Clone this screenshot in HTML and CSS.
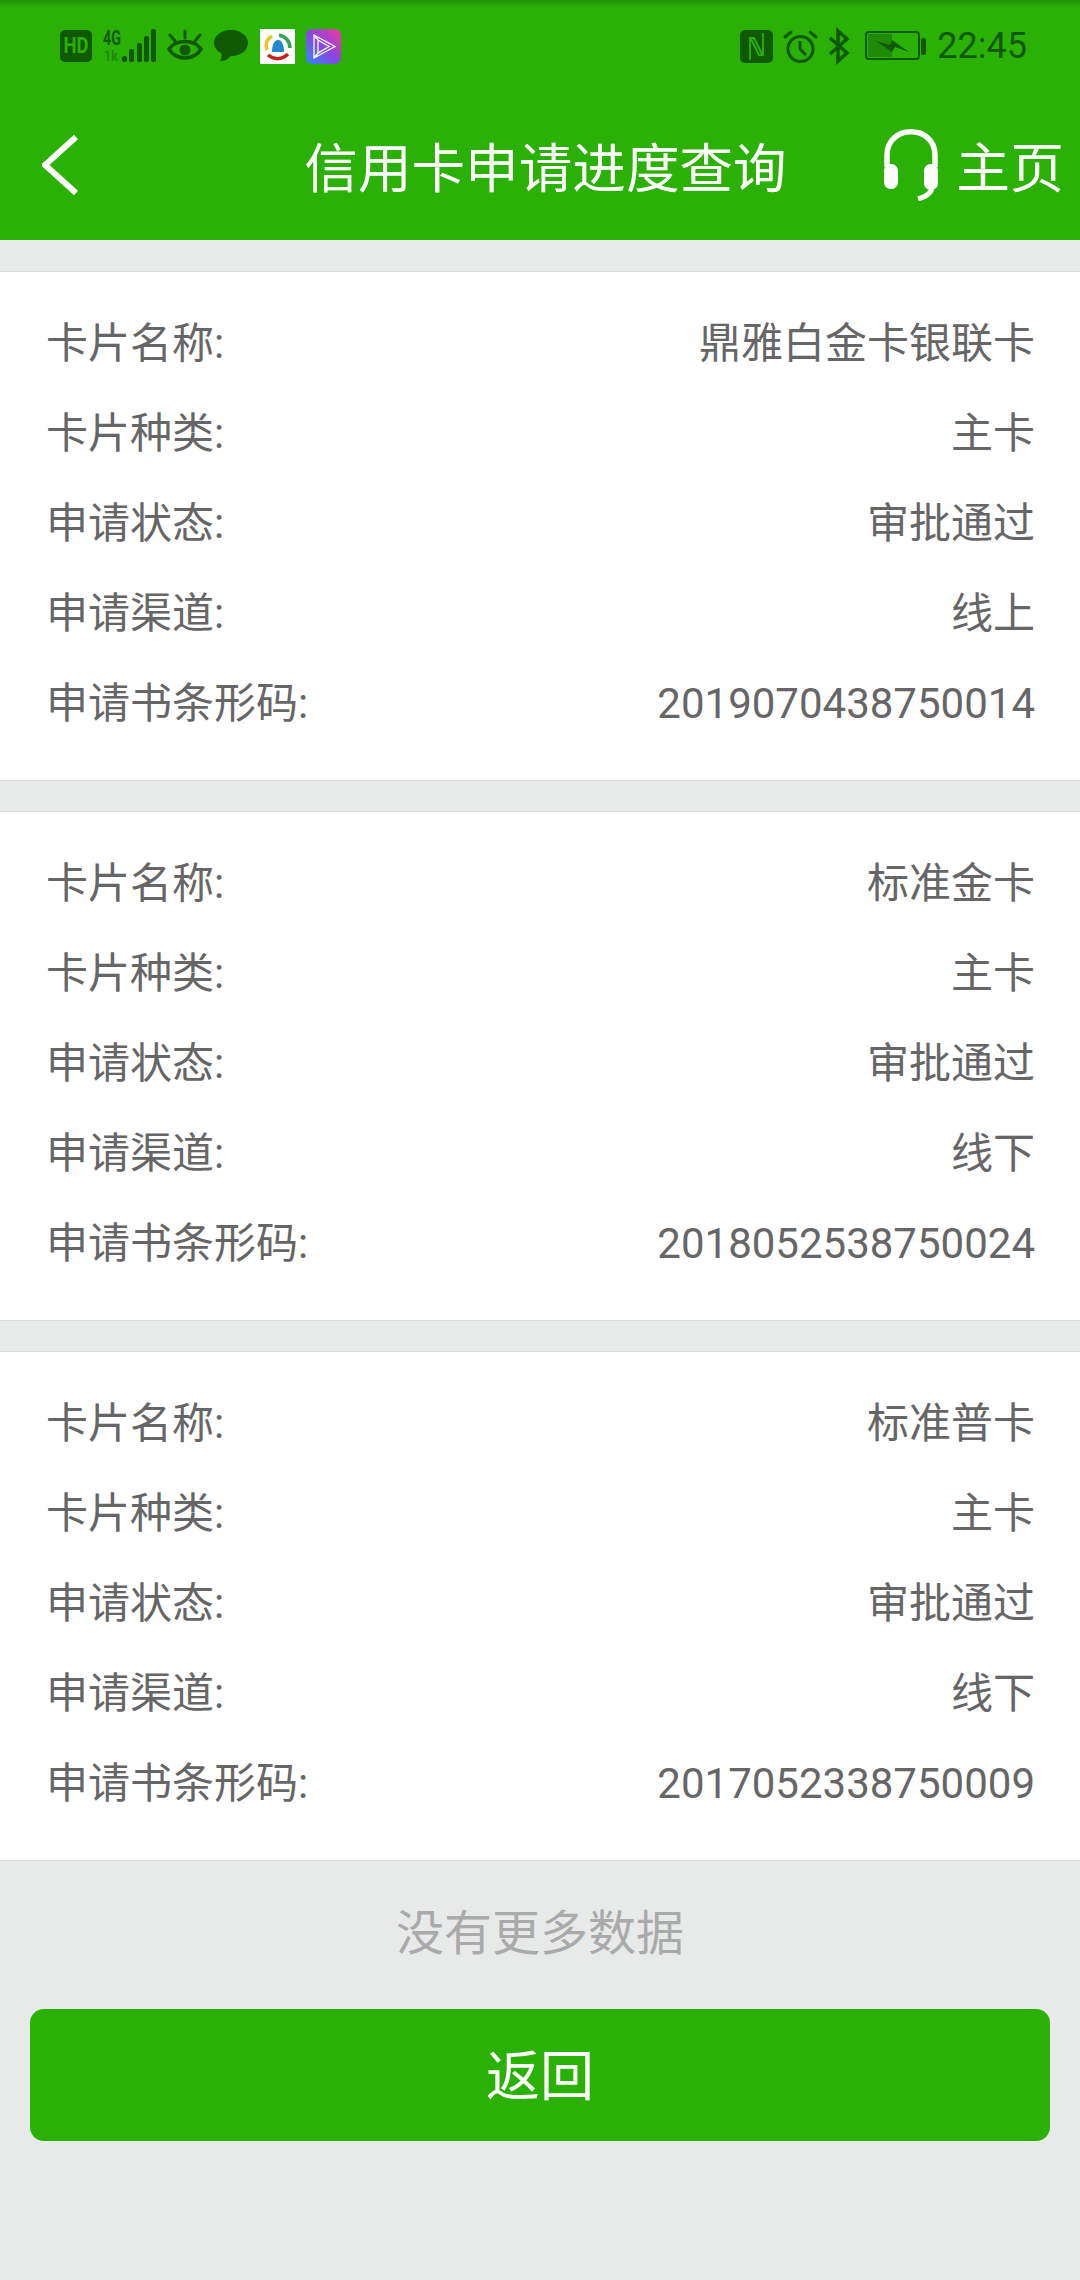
FILE: index.html
```html
<!DOCTYPE html>
<html lang="zh-CN">
<head>
    <meta charset="UTF-8">
    <meta name="viewport" content="width=device-width, initial-scale=1.0">
    <title>信用卡申请进度查询</title>
    <link rel="stylesheet" href="styles.css">
</head>
<body>
    <header class="top">
        <div class="status-bar">
            <div class="status-left">
                <svg class="ic" width="32" height="32" viewBox="0 0 32 32"><rect width="32" height="32" rx="5" fill="#0f5a00"/><text x="16" y="23" class="hd-text" textLength="25" lengthAdjust="spacingAndGlyphs">HD</text></svg>
                <svg class="ic" width="53" height="34" viewBox="0 0 53 34"><text x="0" y="16" class="net-text" textLength="18" lengthAdjust="spacingAndGlyphs">4G</text><text x="1" y="32" class="net-sub" textLength="14" lengthAdjust="spacingAndGlyphs">1k</text><g fill="#0f5a00"><rect x="19" y="27" width="5" height="6" rx="2"/><rect x="26" y="20" width="5" height="13" rx="2"/><rect x="34" y="14" width="5" height="19" rx="2"/><rect x="41" y="7" width="5" height="26" rx="2"/><rect x="48" y="0" width="5" height="33" rx="2"/></g></svg>
                <svg class="ic" width="36" height="32" viewBox="0 0 36 32" fill="none" stroke="#0f5a00" stroke-width="3.500"><path d="M2 19C9 9 27 9 34 19C27 31 9 31 2 19Z"/><circle cx="18" cy="20" r="5.500" fill="#0f5a00" stroke="none"/><path d="M18 1V8M3 5L8 11M33 5L28 11" stroke-linecap="round" stroke-width="3"/></svg>
                <svg class="ic chat" width="34" height="32" viewBox="0 0 34 32"><path d="M17 0C27 0 34 6 34 13C34 20 27 26 17 26C14 29 11 31 6 31C8 28 8 25 7 23C3 21 0 17 0 13C0 6 7 0 17 0Z" fill="#0f5a00"/></svg>
                <svg class="ic" width="35" height="35" viewBox="0 0 35 35"><rect width="35" height="35" rx="1" fill="#fff"/><g fill="none" stroke-width="3.500"><path d="M7 21C5 15 7 10 12 7" stroke="#eec32a"/><path d="M19 6C25 7 30 12 30 19" stroke="#33a35a"/><path d="M8 26C14 31 22 31 28 25" stroke="#c8201e"/></g><path d="M12 23C12 16 14 11 18 11C22 11 24 16 24 23Z" fill="#1f88d0"/></svg>
                <svg class="ic" width="35" height="35" viewBox="0 0 35 35"><defs><linearGradient id="vid" x1="0" y1="1" x2="1" y2="0"><stop offset="0" stop-color="#2f8cf5"/><stop offset="0.5" stop-color="#8a45e0"/><stop offset="1" stop-color="#f03a9c"/></linearGradient></defs><rect width="35" height="35" rx="6" fill="url(#vid)"/><path d="M8 6L29 17.500L8 29ZM12 11L23 17.500L12 24ZM8 6L12 11M8 29L12 24" fill="none" stroke="#fff" stroke-width="1.300"/></svg>
            </div>
            <div class="status-right">
                <svg class="ic" width="33" height="33" viewBox="0 0 33 33"><rect width="33" height="33" rx="5" fill="#0f5a00"/><path d="M10 30V8H14L23 26M23 3V25H19L10 7" fill="none" stroke="#2bb006" stroke-width="1.800"/></svg>
                <svg class="ic" width="33" height="34" viewBox="0 0 33 34" fill="none" stroke="#0f5a00" stroke-width="3"><circle cx="16.500" cy="20" r="12.500"/><path d="M16 12V20L22 26" stroke-width="3"/><path d="M1 8L7 3M32 8L26 3" stroke-linecap="round"/></svg>
                <svg class="ic bt" width="21" height="34" viewBox="0 0 21 34" fill="none" stroke="#0f5a00" stroke-width="3.500"><path d="M2 9L19 24L10 32V2L19 10L2 25"/></svg>
                <svg class="ic" width="61" height="30" viewBox="0 0 61 30"><rect x="1" y="1" width="53" height="27" rx="3" fill="none" stroke="#0f5a00" stroke-width="2"/><rect x="3" y="3" width="24" height="23" fill="#1f8a05"/><rect x="56" y="7" width="5" height="17" rx="2" fill="#0f5a00"/><path d="M11 10L25 14L27 9L44 21L30 16L27 21Z" fill="#0f5a00"/></svg>
                <span class="clock">22:45</span>
            </div>
        </div>
        <div class="nav-bar">
            <svg class="back" width="36" height="62" viewBox="0 0 36 62"><path d="M34 3L3 31L34 59" fill="none" stroke="#fff" stroke-width="6"/></svg>
            <h1 class="nav-title">信用卡申请进度查询</h1>
            <div class="nav-home">
                <svg width="56" height="74" viewBox="0 0 56 74"><path d="M4 40V28C4 -3 52 -3 52 28V40" fill="none" stroke="#fff" stroke-width="5.500"/><rect x="1" y="37" width="14" height="25" rx="6.500" fill="#fff"/><rect x="41" y="37" width="14" height="26" rx="6.500" fill="#fff"/><path d="M49 62C47 67 42 70 35 72" fill="none" stroke="#fff" stroke-width="5"/></svg>
                <span>主页</span>
            </div>
        </div>
    </header>

    <main class="list">
        <section class="card">
            <div class="row"><span>卡片名称:</span><span>鼎雅白金卡银联卡</span></div>
            <div class="row"><span>卡片种类:</span><span>主卡</span></div>
            <div class="row"><span>申请状态:</span><span>审批通过</span></div>
            <div class="row"><span>申请渠道:</span><span>线上</span></div>
            <div class="row"><span>申请书条形码:</span><span>2019070438750014</span></div>
        </section>
        <section class="card">
            <div class="row"><span>卡片名称:</span><span>标准金卡</span></div>
            <div class="row"><span>卡片种类:</span><span>主卡</span></div>
            <div class="row"><span>申请状态:</span><span>审批通过</span></div>
            <div class="row"><span>申请渠道:</span><span>线下</span></div>
            <div class="row"><span>申请书条形码:</span><span>2018052538750024</span></div>
        </section>
        <section class="card">
            <div class="row"><span>卡片名称:</span><span>标准普卡</span></div>
            <div class="row"><span>卡片种类:</span><span>主卡</span></div>
            <div class="row"><span>申请状态:</span><span>审批通过</span></div>
            <div class="row"><span>申请渠道:</span><span>线下</span></div>
            <div class="row"><span>申请书条形码:</span><span>2017052338750009</span></div>
        </section>
    </main>

    <p class="no-more">没有更多数据</p>
    <button type="button" class="back-btn">返回</button>
</body>
</html>
```

FILE: styles.css
```css
* {
    box-sizing: border-box;
}

body {
    margin: 0;
    height: 2280px;
    overflow: hidden;
    background-color: #e8eaea;
    font-family: "Roboto", "Noto Sans CJK SC", sans-serif;
}

.top {
    height: 240px;
    background-color: #2bb006;
    color: white;
}

.status-bar {
    height: 92px;
    padding: 0 53px 0 60px;
    display: flex;
    justify-content: space-between;
    align-items: center;
    background: linear-gradient(#249405, #2bb006 8px);
}

.status-left, .status-right {
    display: flex;
    align-items: center;
    gap: 11px;
}

.bt {
    margin-right: 5px;
}

.chat {
    margin-right: 1px;
}

.ic {
    display: block;
    overflow: visible;
}

.hd-text {
    font-size: 22px;
    font-weight: 700;
    fill: #2bb006;
    text-anchor: middle;
}

.net-text {
    font-size: 20px;
    font-weight: 700;
    fill: #0f5a00;
}

.net-sub {
    font-size: 15px;
    font-weight: 700;
    fill: #1f8a05;
}

.clock {
    font-size: 36px;
    color: #0f5a00;
}

.nav-bar {
    height: 148px;
    padding: 0 16px 4px 42px;
    display: flex;
    align-items: center;
}

.back {
    flex: none;
    margin-top: 2px;
}

.nav-title {
    flex: 1;
    margin: 0;
    padding-left: 130px;
    font-size: 53.600px;
    font-weight: 400;
    text-align: center;
}

.nav-home {
    display: flex;
    align-items: center;
    gap: 17px;
    font-size: 54px;
}

.list {
    padding-top: 31px;
}

.card {
    height: 510px;
    margin-bottom: 30px;
    padding: 27px 45px 0 46px;
    background-color: white;
    border-top: 1px solid #dcdede;
    border-bottom: 1px solid #dcdede;
}

.row {
    height: 90px;
    display: flex;
    justify-content: space-between;
    align-items: baseline;
    font-size: 42px;
    line-height: 90px;
    color: #666;
}

.no-more {
    margin: -7px 0 0;
    height: 100px;
    line-height: 100px;
    text-align: center;
    font-size: 48px;
    color: #aaa;
}

.back-btn {
    display: block;
    width: 1020px;
    height: 132px;
    margin: 25px 30px 0;
    padding: 0 0 5px;
    border: none;
    border-radius: 14px;
    background-color: #2bb006;
    color: white;
    font-family: inherit;
    font-size: 54px;
    cursor: pointer;
}
```
